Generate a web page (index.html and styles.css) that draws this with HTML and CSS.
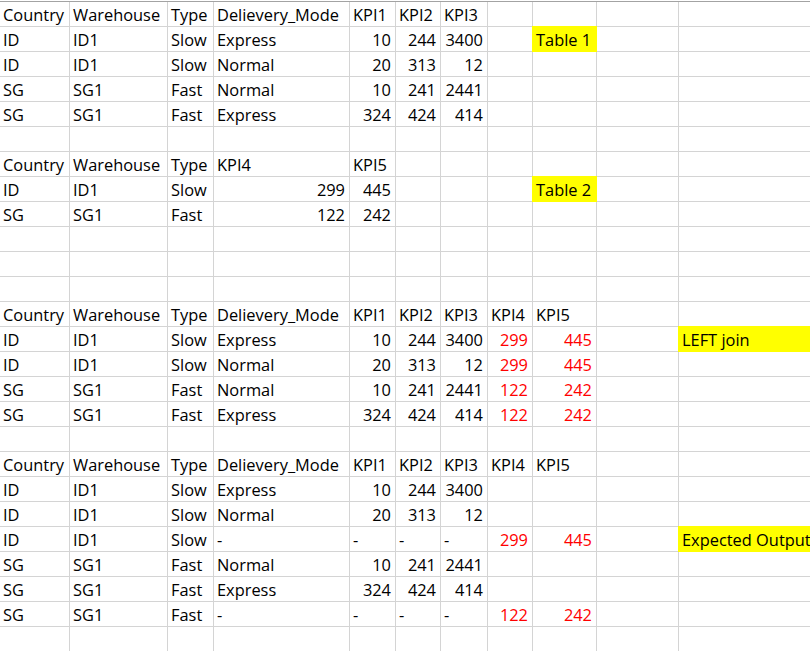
FILE: index.html
```html
<!DOCTYPE html>
<html lang="en">
<head>
<meta charset="utf-8">
<title>Sheet</title>
<link rel="stylesheet" href="styles.css">
</head>
<body>
<div class="sheet">
  <div class="row"><div>Country</div><div>Warehouse</div><div>Type</div><div>Delievery_Mode</div><div>KPI1</div><div>KPI2</div><div>KPI3</div><div></div><div></div><div></div><div></div></div>
  <div class="row"><div>ID</div><div>ID1</div><div>Slow</div><div>Express</div><div class="n">10</div><div class="n">244</div><div class="n">3400</div><div></div><div class="y">Table 1</div><div></div><div></div></div>
  <div class="row"><div>ID</div><div>ID1</div><div>Slow</div><div>Normal</div><div class="n">20</div><div class="n">313</div><div class="n">12</div><div></div><div></div><div></div><div></div></div>
  <div class="row"><div>SG</div><div>SG1</div><div>Fast</div><div>Normal</div><div class="n">10</div><div class="n">241</div><div class="n">2441</div><div></div><div></div><div></div><div></div></div>
  <div class="row"><div>SG</div><div>SG1</div><div>Fast</div><div>Express</div><div class="n">324</div><div class="n">424</div><div class="n">414</div><div></div><div></div><div></div><div></div></div>
  <div class="row"><div></div><div></div><div></div><div></div><div></div><div></div><div></div><div></div><div></div><div></div><div></div></div>
  <div class="row"><div>Country</div><div>Warehouse</div><div>Type</div><div>KPI4</div><div>KPI5</div><div></div><div></div><div></div><div></div><div></div><div></div></div>
  <div class="row"><div>ID</div><div>ID1</div><div>Slow</div><div class="n">299</div><div class="n">445</div><div></div><div></div><div></div><div class="y">Table 2</div><div></div><div></div></div>
  <div class="row"><div>SG</div><div>SG1</div><div>Fast</div><div class="n">122</div><div class="n">242</div><div></div><div></div><div></div><div></div><div></div><div></div></div>
  <div class="row"><div></div><div></div><div></div><div></div><div></div><div></div><div></div><div></div><div></div><div></div><div></div></div>
  <div class="row"><div></div><div></div><div></div><div></div><div></div><div></div><div></div><div></div><div></div><div></div><div></div></div>
  <div class="row"><div></div><div></div><div></div><div></div><div></div><div></div><div></div><div></div><div></div><div></div><div></div></div>
  <div class="row"><div>Country</div><div>Warehouse</div><div>Type</div><div>Delievery_Mode</div><div>KPI1</div><div>KPI2</div><div>KPI3</div><div>KPI4</div><div>KPI5</div><div></div><div></div></div>
  <div class="row"><div>ID</div><div>ID1</div><div>Slow</div><div>Express</div><div class="n">10</div><div class="n">244</div><div class="n">3400</div><div class="n r">299</div><div class="n r">445</div><div></div><div class="y">LEFT join</div></div>
  <div class="row"><div>ID</div><div>ID1</div><div>Slow</div><div>Normal</div><div class="n">20</div><div class="n">313</div><div class="n">12</div><div class="n r">299</div><div class="n r">445</div><div></div><div></div></div>
  <div class="row"><div>SG</div><div>SG1</div><div>Fast</div><div>Normal</div><div class="n">10</div><div class="n">241</div><div class="n">2441</div><div class="n r">122</div><div class="n r">242</div><div></div><div></div></div>
  <div class="row"><div>SG</div><div>SG1</div><div>Fast</div><div>Express</div><div class="n">324</div><div class="n">424</div><div class="n">414</div><div class="n r">122</div><div class="n r">242</div><div></div><div></div></div>
  <div class="row"><div></div><div></div><div></div><div></div><div></div><div></div><div></div><div></div><div></div><div></div><div></div></div>
  <div class="row"><div>Country</div><div>Warehouse</div><div>Type</div><div>Delievery_Mode</div><div>KPI1</div><div>KPI2</div><div>KPI3</div><div>KPI4</div><div>KPI5</div><div></div><div></div></div>
  <div class="row"><div>ID</div><div>ID1</div><div>Slow</div><div>Express</div><div class="n">10</div><div class="n">244</div><div class="n">3400</div><div></div><div></div><div></div><div></div></div>
  <div class="row"><div>ID</div><div>ID1</div><div>Slow</div><div>Normal</div><div class="n">20</div><div class="n">313</div><div class="n">12</div><div></div><div></div><div></div><div></div></div>
  <div class="row"><div>ID</div><div>ID1</div><div>Slow</div><div>-</div><div>-</div><div>-</div><div>-</div><div class="n r">299</div><div class="n r">445</div><div></div><div class="y">Expected Output</div></div>
  <div class="row"><div>SG</div><div>SG1</div><div>Fast</div><div>Normal</div><div class="n">10</div><div class="n">241</div><div class="n">2441</div><div></div><div></div><div></div><div></div></div>
  <div class="row"><div>SG</div><div>SG1</div><div>Fast</div><div>Express</div><div class="n">324</div><div class="n">424</div><div class="n">414</div><div></div><div></div><div></div><div></div></div>
  <div class="row"><div>SG</div><div>SG1</div><div>Fast</div><div>-</div><div>-</div><div>-</div><div>-</div><div class="n r">122</div><div class="n r">242</div><div></div><div></div></div>
  <div class="row"><div></div><div></div><div></div><div></div><div></div><div></div><div></div><div></div><div></div><div></div><div></div></div>
</div>
</body>
</html>
```
FILE: styles.css
```css
html, body {
  margin: 0;
  padding: 0;
  background: #ffffff;
  overflow: hidden;
}

body {
  font-family: "Open Sans", "Liberation Sans", sans-serif;
  font-size: 16.4px;
  color: #000000;
}

.sheet {
  margin-top: 1px;
  display: grid;
  grid-template-columns: 69px 97px 45px 135px 45px 44px 46px 44px 63px 81px 1fr;
  grid-auto-rows: 24px;
  gap: 1px;
  background: #d4d4d4;
  border-top: 1px solid #a3a3a3;
  width: 810px;
}

.row {
  display: contents;
}

.row > div {
  background: #ffffff;
  padding: 3px 3px 0 3px;
  line-height: 20px;
  white-space: nowrap;
  min-width: 0;
}

.row > .n {
  text-align: right;
  padding-right: 4px;
}

.row > .r {
  color: #ff0000;
}

.row > .y {
  background: #ffff00;
  outline: 1px solid #ffff00;
  position: relative;
  z-index: 1;
}
```
